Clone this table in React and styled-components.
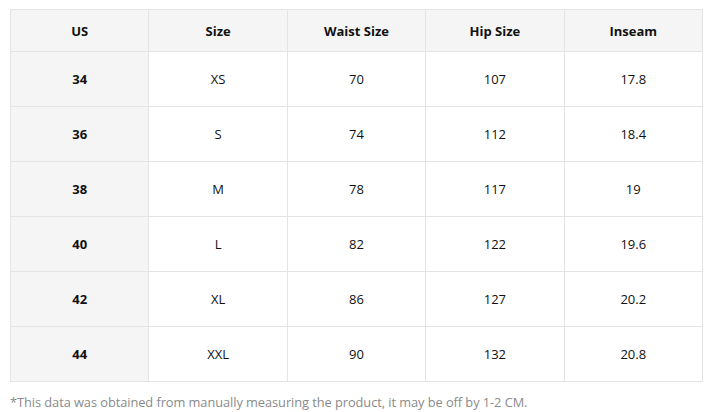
import React from 'react';
import styled, { createGlobalStyle } from 'styled-components';

const GlobalStyle = createGlobalStyle`
  body {
    margin: 0;
    background: #fff;
    font-family: "Open Sans", "Noto Sans", Arial, sans-serif;
  }
`;

const headers = ['US', 'Size', 'Waist Size', 'Hip Size', 'Inseam'];

const rows = [
  ['34', 'XS', '70', '107', '17.8'],
  ['36', 'S', '74', '112', '18.4'],
  ['38', 'M', '78', '117', '19'],
  ['40', 'L', '82', '122', '19.6'],
  ['42', 'XL', '86', '127', '20.2'],
  ['44', 'XXL', '90', '132', '20.8'],
];

function App() {
  return (
    <>
      <GlobalStyle />
      <StWrap>
        <StTable>
          <thead>
            <tr>
              {headers.map((h) => (
                <StHead key={h}>{h}</StHead>
              ))}
            </tr>
          </thead>
          <tbody>
            {rows.map((row) => (
              <tr key={row[0]}>
                {row.map((cell, i) => (
                  <StCell key={i} $first={i === 0}>
                    {cell}
                  </StCell>
                ))}
              </tr>
            ))}
          </tbody>
        </StTable>
        <StNote>*This data was obtained from manually measuring the product, it may be off by 1-2 CM.</StNote>
      </StWrap>
    </>
  );
}

const StWrap = styled.div`
  padding: 9px 8px 0 10px;
`;

const StTable = styled.table`
  width: 693px;
  border-collapse: collapse;
  table-layout: fixed;
  color: #111;
  font-size: 13px;
`;

const StHead = styled.th`
  height: 41px;
  padding: 0;
  background: #f5f5f5;
  border: 1px solid #e4e4e4;
  font-weight: 700;
  text-align: center;
`;

const StCell = styled.td`
  height: 54px;
  padding: 0;
  border: 1px solid #e4e4e4;
  text-align: center;
  background: ${(p) => (p.$first ? '#f5f5f5' : '#fff')};
  font-weight: ${(p) => (p.$first ? 700 : 400)};
`;

const StNote = styled.p`
  margin: 12px 0 0;
  font-size: 12.8px;
  line-height: 16px;
  letter-spacing: -0.05px;
  color: #8a8a8a;
`;

export default App;
